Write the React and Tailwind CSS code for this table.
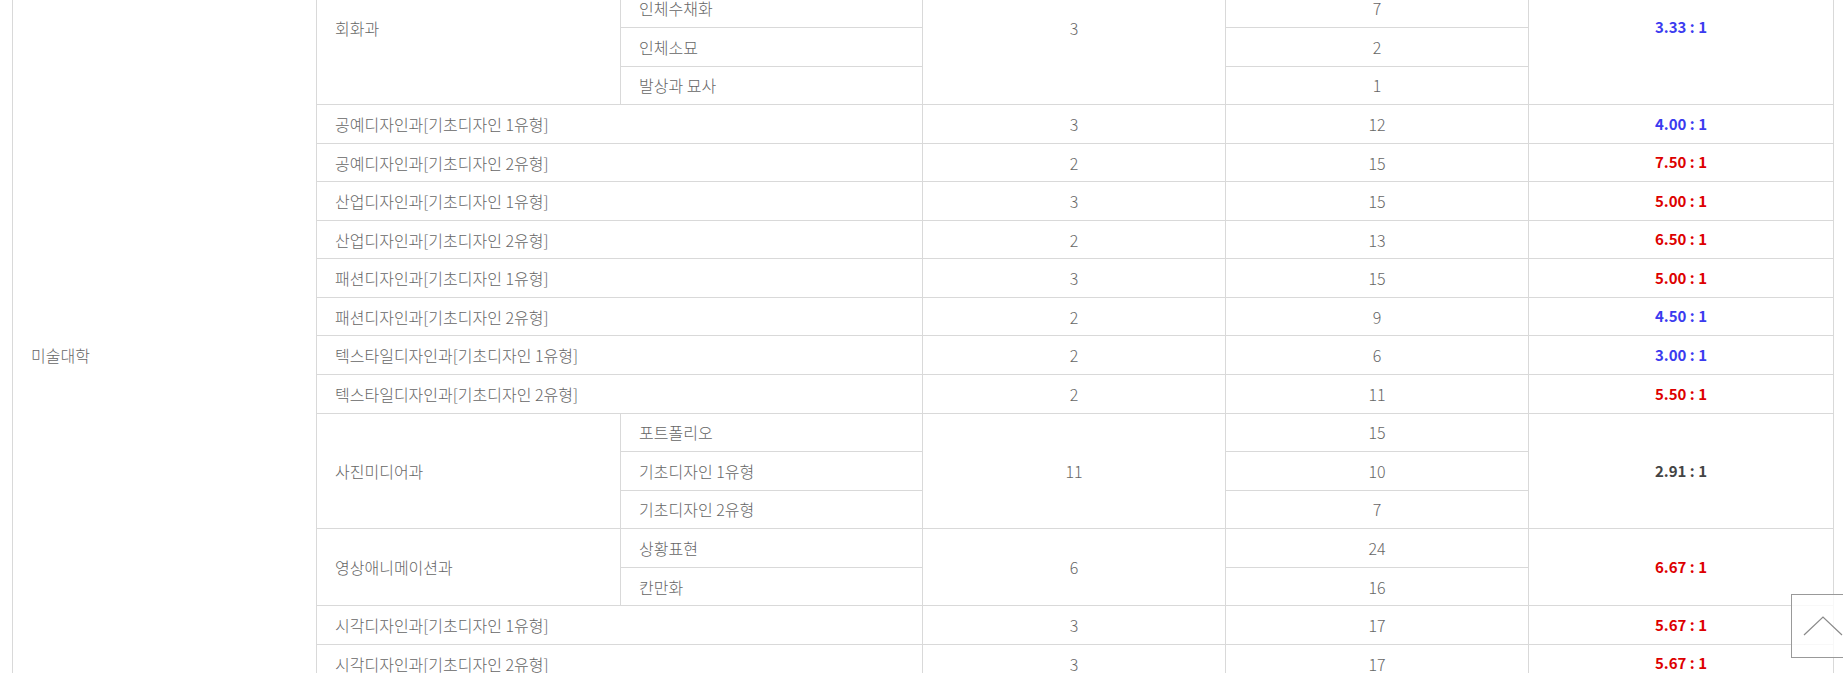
import React from "react";

const BLUE = "text-[#3b3bef]";
const RED = "text-[#dd0000]";
const DARK = "text-[#444444]";

const cellBase = "border border-[#d9d9d9] h-[38.55px] p-0 align-middle";
const leftCell = cellBase + " text-left pl-[18px]";
const centerCell = cellBase + " text-center";

function Ratio({ value, tone, rowSpan }) {
  const cls = tone === "blue" ? BLUE : tone === "red" ? RED : DARK;
  return (
    <td rowSpan={rowSpan} className={centerCell + " text-[15px] font-bold " + cls}>
      {value}
    </td>
  );
}

const singles = [
  ["공예디자인과[기초디자인 1유형]", "3", "12", "4.00 : 1", "blue"],
  ["공예디자인과[기초디자인 2유형]", "2", "15", "7.50 : 1", "red"],
  ["산업디자인과[기초디자인 1유형]", "3", "15", "5.00 : 1", "red"],
  ["산업디자인과[기초디자인 2유형]", "2", "13", "6.50 : 1", "red"],
  ["패션디자인과[기초디자인 1유형]", "3", "15", "5.00 : 1", "red"],
  ["패션디자인과[기초디자인 2유형]", "2", "9", "4.50 : 1", "blue"],
  ["텍스타일디자인과[기초디자인 1유형]", "2", "6", "3.00 : 1", "blue"],
  ["텍스타일디자인과[기초디자인 2유형]", "2", "11", "5.50 : 1", "red"],
];

const tail = [
  ["시각디자인과[기초디자인 1유형]", "3", "17", "5.67 : 1", "red"],
  ["시각디자인과[기초디자인 2유형]", "3", "17", "5.67 : 1", "red"],
  ["조소과[기초조형]", "4", "14", "3.50 : 1", "blue"],
  ["조소과[인체소조]", "3", "12", "4.00 : 1", "blue"],
];

function SingleRow({ r }) {
  return (
    <tr>
      <td colSpan={2} className={leftCell}>{r[0]}</td>
      <td className={centerCell}>{r[1]}</td>
      <td className={centerCell}>{r[2]}</td>
      <Ratio value={r[3]} tone={r[4]} />
    </tr>
  );
}

export default function App() {
  return (
    <div className="relative h-[673px] w-full overflow-hidden bg-white font-['Noto_Sans_CJK_KR','Noto_Sans',sans-serif] text-[16px] font-light text-[#666666]">
      <table className="ml-[12px] mt-[-50px] w-[1821px] table-fixed border-collapse">
        <colgroup>
          <col className="w-[304px]" />
          <col className="w-[304px]" />
          <col className="w-[302px]" />
          <col className="w-[303px]" />
          <col className="w-[303px]" />
          <col className="w-[305px]" />
        </colgroup>
        <tbody>
          <tr>
            <td rowSpan={22} className={leftCell}>미술대학</td>
            <td rowSpan={4} className={leftCell}>회화과</td>
            <td className={leftCell}>인물화</td>
            <td rowSpan={4} className={centerCell}>3</td>
            <td className={centerCell}>0</td>
            <Ratio value="3.33 : 1" tone="blue" rowSpan={4} />
          </tr>
          <tr>
            <td className={leftCell}>인체수채화</td>
            <td className={centerCell}>7</td>
          </tr>
          <tr>
            <td className={leftCell}>인체소묘</td>
            <td className={centerCell}>2</td>
          </tr>
          <tr>
            <td className={leftCell}>발상과 묘사</td>
            <td className={centerCell}>1</td>
          </tr>
          {singles.map((r) => (
            <SingleRow key={r[0]} r={r} />
          ))}
          <tr>
            <td rowSpan={3} className={leftCell}>사진미디어과</td>
            <td className={leftCell}>포트폴리오</td>
            <td rowSpan={3} className={centerCell}>11</td>
            <td className={centerCell}>15</td>
            <Ratio value="2.91 : 1" tone="dark" rowSpan={3} />
          </tr>
          <tr>
            <td className={leftCell}>기초디자인 1유형</td>
            <td className={centerCell}>10</td>
          </tr>
          <tr>
            <td className={leftCell}>기초디자인 2유형</td>
            <td className={centerCell}>7</td>
          </tr>
          <tr>
            <td rowSpan={2} className={leftCell}>영상애니메이션과</td>
            <td className={leftCell}>상황표현</td>
            <td rowSpan={2} className={centerCell}>6</td>
            <td className={centerCell}>24</td>
            <Ratio value="6.67 : 1" tone="red" rowSpan={2} />
          </tr>
          <tr>
            <td className={leftCell}>칸만화</td>
            <td className={centerCell}>16</td>
          </tr>
          {tail.map((r) => (
            <SingleRow key={r[0]} r={r} />
          ))}
        </tbody>
      </table>

      <button
        type="button"
        aria-label="맨 위로"
        className="fixed left-[1791px] top-[594px] h-[64px] w-[64px] border border-[#999999] bg-white/80"
      >
        <svg
          width="64"
          height="64"
          viewBox="0 0 64 64"
          className="absolute left-0 top-0"
          fill="none"
          stroke="#8a8a8a"
          strokeWidth="1.2"
        >
          <polyline points="12,40 31,22 50,40" />
        </svg>
      </button>
    </div>
  );
}
